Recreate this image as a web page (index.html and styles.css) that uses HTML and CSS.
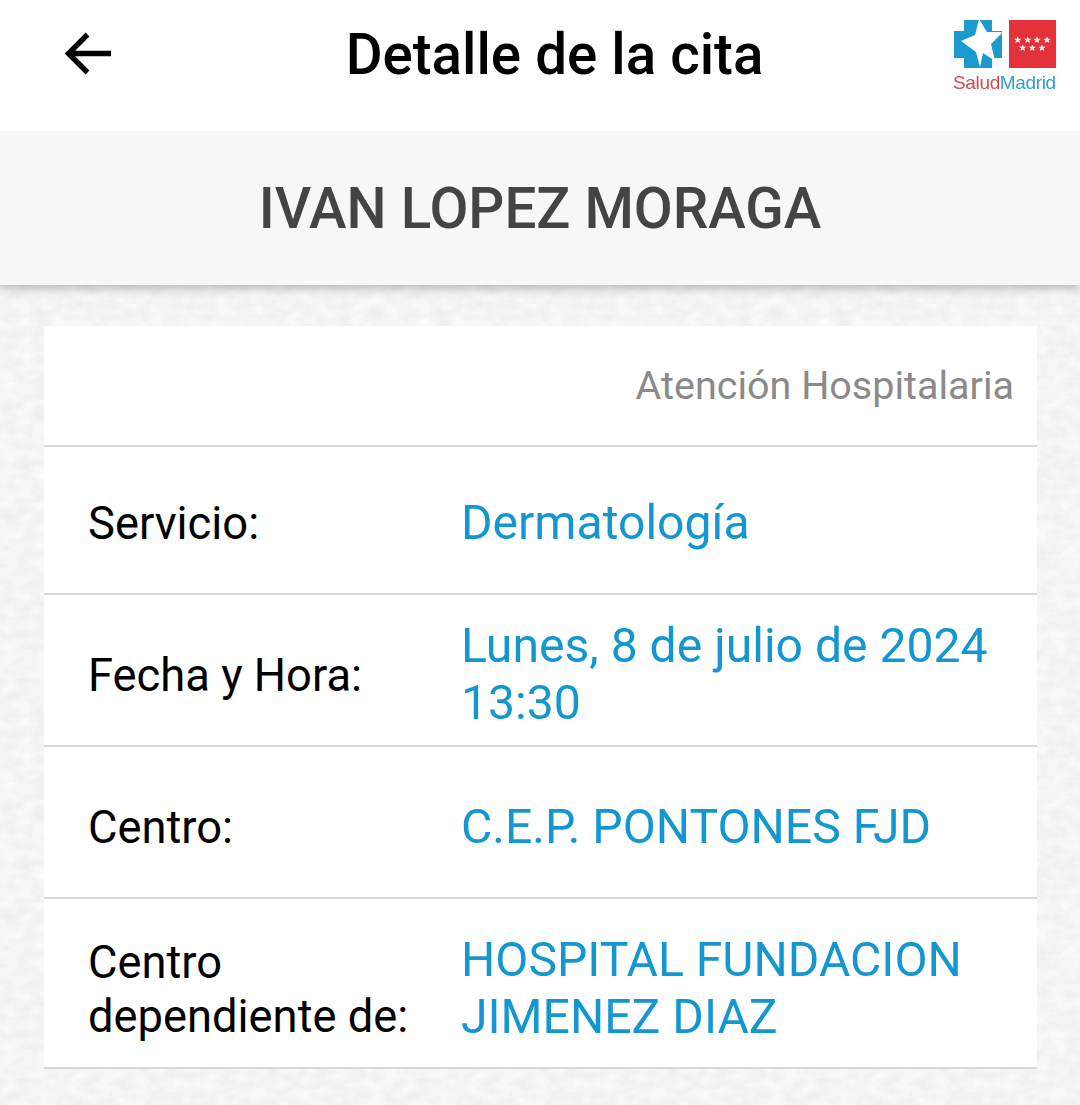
FILE: index.html
```html
<!DOCTYPE html>
<html lang="es">
<head>
    <meta charset="UTF-8">
    <meta name="viewport" content="width=device-width, initial-scale=1.0">
    <title>Detalle de la cita</title>
    <link rel="stylesheet" href="styles.css">
</head>
<body>
    <header class="topbar">
        <a class="back" href="#">
            <svg width="48" height="44" viewBox="0 0 48 44"><path d="M47 22.500H5M23.500 3.500L4.500 22.500L23.500 41.500" fill="none" stroke="#000" stroke-width="5.400"/></svg>
        </a>
        <h1 class="title">Detalle de la cita</h1>
        <div class="logo">
            <div class="logo-marks">
                <svg width="50" height="48" viewBox="0 0 50 48"><path d="M11 0H39V11H49V38H39V48H11V38H1V11H11Z" fill="#1b9ad0"/><path d="M26 -1L34 12L50 12L38 24L42 41L30 33L27 47L23 32L8 21L22 15Z" fill="#fff"/></svg>
                <svg width="47" height="48" viewBox="0 0 47 48">
                    <defs><polygon id="st" points="0,-3.600 1,-1.200 3.600,-1.200 1.500,.5 2.300,3.100 0,1.600 -2.300,3.100 -1.500,.5 -3.600,-1.200 -1,-1.200"/></defs>
                    <rect width="47" height="48" fill="#e4323a"/>
                    <g fill="#fff">
                        <use href="#st" x="8.700" y="20"/><use href="#st" x="18.700" y="20"/><use href="#st" x="28" y="20"/><use href="#st" x="38" y="20"/>
                        <use href="#st" x="13.700" y="28"/><use href="#st" x="23.300" y="28"/><use href="#st" x="33" y="28"/>
                    </g>
                </svg>
            </div>
            <div class="logo-text"><span class="salud">Salud</span><span class="madrid">Madrid</span></div>
        </div>
    </header>
    <section class="patient">IVAN LOPEZ MORAGA</section>
    <main class="content">
        <div class="card">
            <div class="kind">Atención Hospitalaria</div>
            <div class="row row-service">
                <div class="label">Servicio:</div>
                <div class="value">Dermatología</div>
            </div>
            <div class="row">
                <div class="label">Fecha y Hora:</div>
                <div class="value">Lunes, 8 de julio de 2024<br>13:30</div>
            </div>
            <div class="row">
                <div class="label">Centro:</div>
                <div class="value">C.E.P. PONTONES FJD</div>
            </div>
            <div class="row row-parent">
                <div class="label">Centro dependiente de:</div>
                <div class="value">HOSPITAL FUNDACION JIMENEZ DIAZ</div>
            </div>
        </div>
    </main>
</body>
</html>
```

FILE: styles.css
```css
html, body {
    margin: 0;
    padding: 0;
    font-family: Roboto, "Liberation Sans", sans-serif;
}
body {
    height: 1105px;
    overflow: hidden;
    background-color: #efefef;
    background-image: url("data:image/svg+xml,%3Csvg xmlns='http://www.w3.org/2000/svg' width='400' height='400'%3E%3Cfilter id='n'%3E%3CfeTurbulence type='fractalNoise' baseFrequency='.06 .1' numOctaves='3'/%3E%3CfeColorMatrix values='0 0 0 0 1 0 0 0 0 1 0 0 0 0 1 0 0 0 1.2 -.25'/%3E%3C/filter%3E%3Crect width='400' height='400' filter='url(%23n)'/%3E%3C/svg%3E");
}
.topbar {
    height: 131px;
    background: #fff;
    display: flex;
    align-items: center;
    justify-content: space-between;
    position: relative;
    z-index: 2;
}
.back {
    display: flex;
    margin-left: 64px;
    margin-top: -26px;
}
.title {
    margin: -22px 0 0 44px;
    font-size: 56.500px;
    line-height: 68px;
    font-weight: 500;
    color: #000;
}
.logo {
    margin-right: 24px;
    margin-top: -18px;
    width: 103px;
    filter: blur(0.5px);
}
.logo-marks {
    display: flex;
    justify-content: space-between;
}
.logo-text {
    font-family: "Liberation Sans", Arial, sans-serif;
    font-size: 19px;
    line-height: 22px;
    letter-spacing: -0.35px;
    white-space: nowrap;
    margin-top: 4px;
}
.salud {
    color: #d9474f;
}
.madrid {
    color: #2d9dd1;
}
.patient {
    height: 154px;
    background: #f7f7f7;
    box-shadow: 0 3px 10px rgba(0, 0, 0, 0.28);
    position: relative;
    z-index: 1;
    display: flex;
    align-items: center;
    justify-content: center;
    font-size: 56.500px;
    font-weight: 500;
    color: #444;
    padding-top: 2px;
    box-sizing: border-box;
}
.content {
    padding: 41px 43px 0 44px;
}
.card {
    background: #fff;
}
.kind {
    height: 119px;
    box-sizing: border-box;
    padding: 39px 23px 0 0;
    text-align: right;
    font-size: 39.500px;
    line-height: 42px;
    color: #8a8a8a;
}
.row {
    display: flex;
    align-items: center;
    height: 152px;
    border-top: 2px solid #d8d8d8;
    box-sizing: border-box;
    padding: 12px 0 0 44px;
}
.row-service {
    height: 148px;
    padding-top: 8px;
}
.row-parent {
    height: 172px;
    padding-top: 13px;
    border-bottom: 2px solid #d8d8d8;
}
.label {
    width: 373px;
    flex: none;
    font-size: 45.300px;
    line-height: 54px;
    color: #000;
    padding-right: 40px;
    box-sizing: border-box;
}
.value {
    font-size: 48.100px;
    line-height: 57px;
    color: #1497d1;
    padding-right: 40px;
    margin-top: -4px;
}
```
